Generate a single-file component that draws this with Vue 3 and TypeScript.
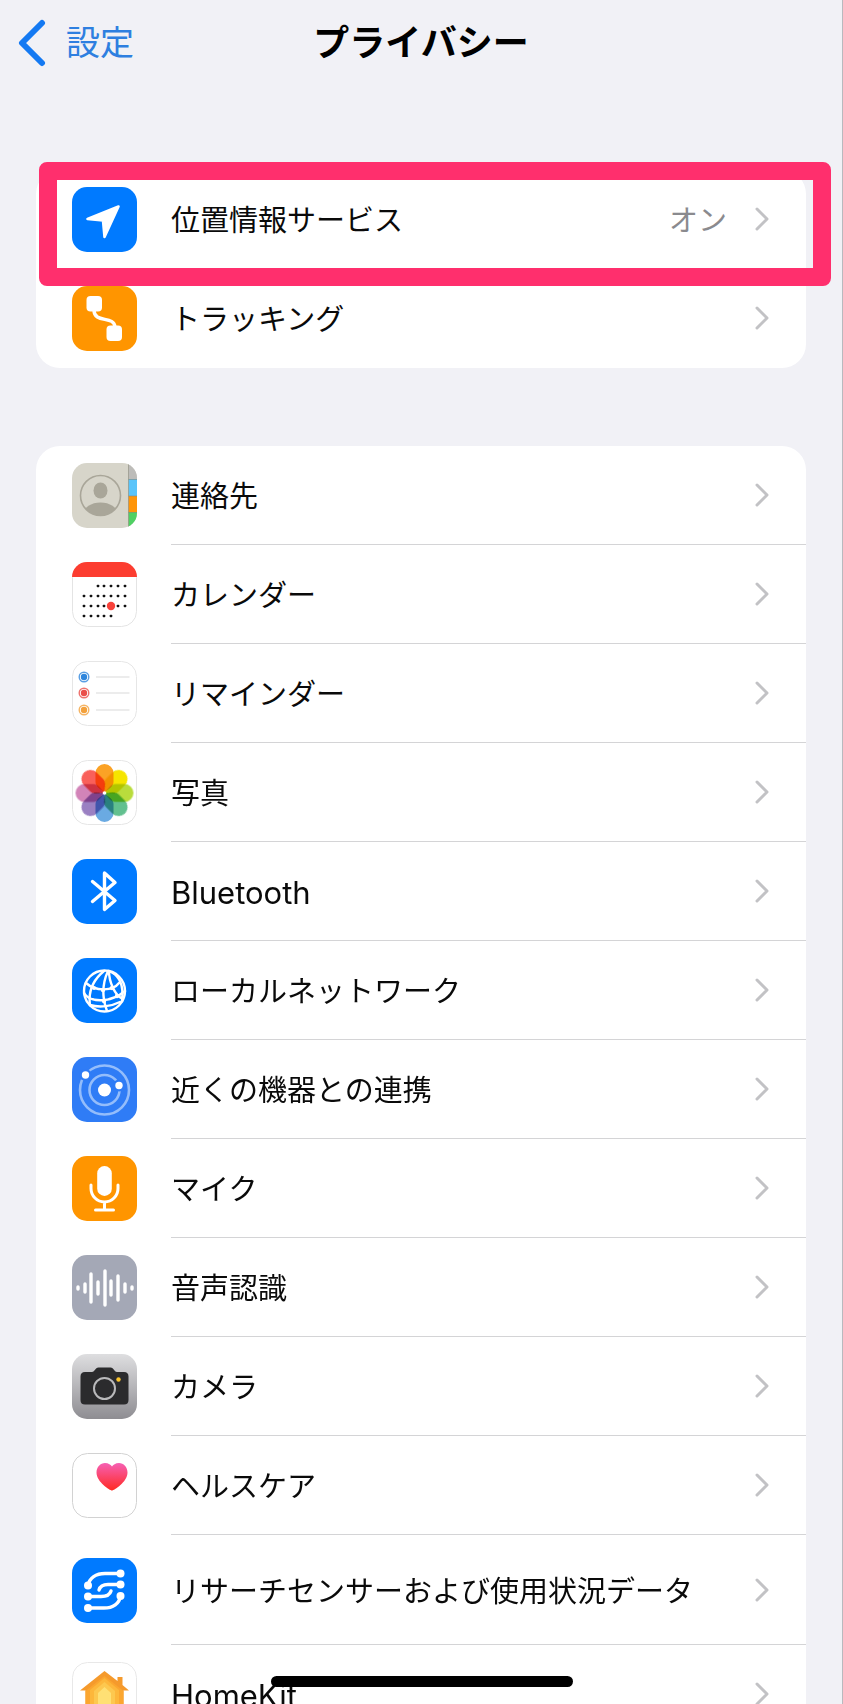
<script setup lang="ts">
interface Row {
  icon: string
  label: string
  value?: string
  tall?: boolean
  latin?: boolean
  highlighted?: boolean
}

const groups: Row[][] = [
  [
    { icon: 'location', label: '位置情報サービス', value: 'オン', highlighted: true },
    { icon: 'tracking', label: 'トラッキング' },
  ],
  [
    { icon: 'contacts', label: '連絡先' },
    { icon: 'calendar', label: 'カレンダー' },
    { icon: 'reminders', label: 'リマインダー' },
    { icon: 'photos', label: '写真' },
    { icon: 'bluetooth', label: 'Bluetooth', latin: true },
    { icon: 'network', label: 'ローカルネットワーク' },
    { icon: 'nearby', label: '近くの機器との連携' },
    { icon: 'mic', label: 'マイク' },
    { icon: 'speech', label: '音声認識' },
    { icon: 'camera', label: 'カメラ' },
    { icon: 'health', label: 'ヘルスケア' },
    { icon: 'research', label: 'リサーチセンサーおよび使用状況データ', tall: true },
    { icon: 'homekit', label: 'HomeKit', latin: true },
  ],
]

const petals = ['#fba225', '#f6e500', '#b9dc3c', '#62c08f', '#6aaae2', '#9a80c2', '#d284b8', '#f9605a']

const dotColumns = [12, 19, 26, 32, 39, 46, 53]
const calendarWeeks = [
  { y: 24, columns: dotColumns.slice(2) },
  { y: 34, columns: dotColumns },
  { y: 44, columns: dotColumns },
  { y: 54, columns: dotColumns.slice(0, 5) },
]

const reminderItems = [
  { y: 16, color: '#2f86dc' },
  { y: 32, color: '#ea4f4a' },
  { y: 49, color: '#f3a13c' },
]

const waveBars = [
  [6, 1], [13, 4], [19, 14], [26, 6], [33, 17], [39, 7], [46, 12], [53, 4], [60, 1],
]
</script>

<template>
  <div class="screen">
    <header class="nav">
      <a class="back" href="#">
        <svg class="back-icon" viewBox="0 0 28 48" aria-hidden="true"><path d="M24 4 4 24 24 44" /></svg>
        <span>設定</span>
      </a>
      <h1>プライバシー</h1>
    </header>

    <main>
      <ul v-for="(rows, g) in groups" :key="g" class="group">
        <li v-for="row in rows" :key="row.icon">
          <a class="row" :class="{ tall: row.tall }" href="#">
            <svg class="icon" viewBox="0 0 65 65" aria-hidden="true">
              <template v-if="row.icon === 'location'">
                <rect width="65" height="65" rx="15" fill="#007aff" />
                <path d="M46.5 19.5 15.5 32 31 33.5 32.5 50Z" fill="#fff" stroke="#fff" stroke-width="2.6" stroke-linejoin="round" />
              </template>
              <template v-else-if="row.icon === 'tracking'">
                <rect width="65" height="65" rx="15" fill="#ff9500" />
                <rect x="14.5" y="10" width="15.5" height="15.5" rx="4" fill="#fff" />
                <rect x="34.5" y="39.5" width="15.5" height="15.5" rx="4" fill="#fff" />
                <path d="M22 24C22 38 42 29 43 41" fill="none" stroke="#fff" stroke-width="3.4" />
              </template>
              <template v-else-if="row.icon === 'contacts'">
                <defs>
                  <clipPath id="contacts-shape"><rect width="65" height="65" rx="15" /></clipPath>
                  <clipPath id="contacts-face"><circle cx="28.5" cy="32.5" r="20" /></clipPath>
                </defs>
                <g clip-path="url(#contacts-shape)">
                  <rect width="65" height="65" fill="#d7d5ca" />
                  <rect x="56.5" width="9" height="16" fill="#bdbcb9" />
                  <rect x="56.5" y="16" width="9" height="17" fill="#5ac4fa" />
                  <rect x="56.5" y="33" width="9" height="16" fill="#ff9509" />
                  <rect x="56.5" y="49" width="9" height="16" fill="#4fd063" />
                  <path d="M56.5 16.5h9M56.5 33h9M56.5 49.5h9M56.5 0v65" stroke="#8a8a7c" stroke-opacity=".6" />
                </g>
                <g clip-path="url(#contacts-face)" fill="#a9a699">
                  <ellipse cx="28.5" cy="27.5" rx="7" ry="8" />
                  <ellipse cx="28.5" cy="51" rx="17" ry="11.5" />
                </g>
                <circle cx="28.5" cy="32.5" r="20" fill="none" stroke="#a9a699" stroke-width="1.6" />
              </template>
              <template v-else-if="row.icon === 'calendar'">
                <rect x=".5" y=".5" width="64" height="64" rx="15" fill="#fff" stroke="#e4e4e4" />
                <path d="M0 15A15 15 0 0 1 15 0H50A15 15 0 0 1 65 15Z" fill="#fc3d30" />
                <g v-for="week in calendarWeeks" :key="week.y" fill="#111">
                  <rect v-for="x in week.columns" :key="x" :x="x - 1.3" :y="week.y - 1.3" width="2.6" height="2.6" rx=".8" />
                </g>
                <circle cx="39" cy="44" r="4.2" fill="#f8423a" />
              </template>
              <template v-else-if="row.icon === 'reminders'">
                <rect x=".5" y=".5" width="64" height="64" rx="15" fill="#fff" stroke="#e6e6e6" />
                <g v-for="item in reminderItems" :key="item.y">
                  <circle cx="12" :cy="item.y" r="3.2" :fill="item.color" />
                  <circle cx="12" :cy="item.y" r="4.8" fill="none" :stroke="item.color" stroke-width="1.4" stroke-opacity=".8" />
                  <path :d="`M24 ${item.y}H57.5`" stroke="#d9d9d9" />
                </g>
              </template>
              <template v-else-if="row.icon === 'photos'">
                <rect x=".5" y=".5" width="64" height="64" rx="15" fill="#fff" stroke="#e6e6e6" />
                <path
                  v-for="(color, i) in petals"
                  :key="color"
                  class="petal"
                  d="M23.5 13A9 9 0 0 1 41.5 13V22C41.5 26 37 29 32.5 32.5C28 29 23.5 26 23.5 22Z"
                  :fill="color"
                  :transform="`rotate(${i * 45} 32.5 33)`"
                />
                <circle cx="32.5" cy="33" r="1.8" fill="#fff" />
              </template>
              <template v-else-if="row.icon === 'bluetooth'">
                <rect width="65" height="65" rx="15" fill="#007aff" />
                <path class="line" d="M20.5 22.5 43 41.5 32.5 50.5V14L43 23.5 20.5 42.5" stroke-width="3.4" />
              </template>
              <template v-else-if="row.icon === 'network'">
                <rect width="65" height="65" rx="15" fill="#007aff" />
                <g class="line" stroke-width="2.4">
                  <circle cx="32.5" cy="33" r="20.5" />
                  <path d="M32 13C21 22 16 33 18 47M36 13C31 24 29 37 35 53M37 13C37 24 43 38 51 41M37 13C47 17 52 27 50 43" />
                  <path d="M14 25C24 34 41 33 47 25M12 35C18 45 39 45 53 33M18 47C28 50 40 48 48 44" />
                </g>
                <g fill="#fff">
                  <circle cx="22" cy="30" r="2" />
                  <circle cx="31" cy="32" r="2.2" />
                  <circle cx="40" cy="30" r="2.2" />
                  <circle cx="32" cy="43" r="2.2" />
                  <circle cx="45" cy="38" r="2.2" />
                </g>
              </template>
              <template v-else-if="row.icon === 'nearby'">
                <rect width="65" height="65" rx="15" fill="#2f7cf6" />
                <circle cx="32.5" cy="33" r="24.5" fill="none" stroke="#94bdfb" stroke-width="2.6" />
                <circle cx="32.5" cy="33" r="15" fill="none" stroke="#94bdfb" stroke-width="2.6" />
                <circle cx="13.5" cy="18" r="6" fill="#2f7cf6" />
                <circle cx="47" cy="28.5" r="6" fill="#2f7cf6" />
                <circle cx="32.5" cy="33" r="6.5" fill="#fff" />
                <circle cx="13.5" cy="18" r="3.7" fill="#fff" />
                <circle cx="47" cy="28.5" r="3.7" fill="#fff" />
              </template>
              <template v-else-if="row.icon === 'mic'">
                <rect width="65" height="65" rx="15" fill="#ff9500" />
                <rect x="25.2" y="10" width="14.6" height="30" rx="7.3" fill="#fff" />
                <path class="line" d="M19 29V32.5A13.5 13.5 0 0 0 46 32.5V29M32.5 46V54M23.5 54H41.5" stroke-width="3" />
              </template>
              <template v-else-if="row.icon === 'speech'">
                <rect width="65" height="65" rx="15" fill="#a4a8b6" />
                <path v-for="[x, h] in waveBars" :key="x" class="line" :d="`M${x} ${33 - h}V${33 + h}`" stroke-width="3.4" />
              </template>
              <template v-else-if="row.icon === 'camera'">
                <defs>
                  <linearGradient id="camera-body" x2="0" y2="1">
                    <stop stop-color="#dedee0" />
                    <stop offset="1" stop-color="#8e8d92" />
                  </linearGradient>
                </defs>
                <rect width="65" height="65" rx="15" fill="url(#camera-body)" />
                <path
                  d="M13 18H20C23 18 23 13.5 26.5 13.5H38.5C42 13.5 42 18 45 18H52Q56.5 18 56.5 22.5V46Q56.5 50.5 52 50.5H13Q8.5 50.5 8.5 46V22.5Q8.5 18 13 18Z"
                  fill="#2b2b2d"
                />
                <circle cx="32.5" cy="34.5" r="10.5" fill="none" stroke="#b9b9bb" stroke-width="2" />
                <circle cx="46.5" cy="25.5" r="2.2" fill="#fbc42d" />
              </template>
              <template v-else-if="row.icon === 'health'">
                <defs>
                  <linearGradient id="heart" x2="0" y2="1">
                    <stop stop-color="#f660b4" />
                    <stop offset="1" stop-color="#ff2a22" />
                  </linearGradient>
                </defs>
                <rect x=".5" y=".5" width="64" height="64" rx="15" fill="#fff" stroke="#d2d2d2" />
                <path
                  d="M40 37.5C38 37.5 24.5 29 24.5 19.5C24.5 14 28.5 10 33 10C36.5 10 39 12 40 13.5C41 12 43.5 10 47 10C51.5 10 55.5 14 55.5 19.5C55.5 29 42 37.5 40 37.5Z"
                  fill="url(#heart)"
                />
              </template>
              <template v-else-if="row.icon === 'research'">
                <rect width="65" height="65" rx="15" fill="#007aff" />
                <g class="line" stroke-width="3.4">
                  <path d="M48.5 15.5H33C24 15.5 17.5 20 16 27.5" />
                  <path d="M48.5 26.5H36C30 26.5 28 28.5 27 32" />
                  <path d="M16 38.5H29C35 38.5 38 36.5 39 33" />
                  <path d="M16 50H32C41 50 47.5 45.5 48.5 38" />
                </g>
                <g fill="#fff">
                  <circle cx="48.5" cy="15.5" r="4" />
                  <circle cx="16" cy="27.5" r="4" />
                  <circle cx="48.5" cy="26.5" r="4" />
                  <circle cx="16" cy="38.5" r="4" />
                  <circle cx="48.5" cy="38" r="4" />
                  <circle cx="16" cy="50" r="4" />
                </g>
              </template>
              <template v-else>
                <rect x=".5" y=".5" width="64" height="64" rx="15" fill="#fff" stroke="#e8e8e8" />
                <path d="M32.5 9 45.5 19V15H50.5V23L57 28.5H51.5V56H13.5V28.5H8Z" fill="#f59a2c" />
                <path d="M32.5 14 51.5 29V56H13.5V29Z" fill="#fba62f" />
                <path d="M32.5 16 47 28V51H18V28Z" fill="#fdb73b" />
                <path d="M32.5 20 43 29V47H22V29Z" fill="#fdc84f" />
                <path d="M32.5 25 39 31V42H26V31Z" fill="#ffe074" />
              </template>
            </svg>
            <span class="content">
              <span class="label" :class="{ latin: row.latin }">{{ row.label }}</span>
              <span v-if="row.value" class="value">{{ row.value }}</span>
              <svg class="chevron" viewBox="0 0 14 24" aria-hidden="true"><path d="M2 2 12 12 2 22" /></svg>
            </span>
          </a>
          <span v-if="row.highlighted" class="highlight" aria-hidden="true"></span>
        </li>
      </ul>
    </main>

    <div class="home-indicator" aria-hidden="true"></div>
  </div>
</template>

<style>
html,
body {
  background: #f1f1f6;
}
body {
  margin: 0;
}
</style>

<style scoped>
.screen {
  box-sizing: border-box;
  height: 100vh;
  overflow-x: hidden;
  overflow-y: auto;
  scrollbar-width: none;
  border-right: 1px solid #b9b9be;
  background: #f1f1f6;
  color: #0a0a0a;
  font-family: Inter, "Noto Sans CJK JP", sans-serif;
  font-size: 29px;
  line-height: 40px;
}
.nav {
  display: grid;
  grid-template-columns: 1fr auto 1fr;
  align-items: center;
  height: 86px;
  padding: 0 18px;
}
.back {
  display: flex;
  align-items: center;
  gap: 20px;
  color: #2e7fe0;
  font-size: 34px;
  font-weight: 400;
  text-decoration: none;
}
.back-icon {
  width: 28px;
  height: 48px;
  fill: none;
  stroke: #1479f2;
  stroke-width: 6;
  stroke-linecap: round;
  stroke-linejoin: round;
}
h1 {
  margin: 0;
  color: #000;
  font-size: 36px;
  font-weight: 700;
}
main {
  padding: 84px 36px 40px;
}
.group {
  margin: 0 0 78px;
  padding: 0;
  border-radius: 24px;
  background: #fff;
  list-style: none;
}
li {
  position: relative;
}
.row {
  display: flex;
  align-items: stretch;
  gap: 34px;
  height: 99px;
  padding-left: 36px;
  color: inherit;
  text-decoration: none;
}
.row.tall {
  height: 110px;
}
.icon {
  flex: none;
  align-self: center;
  width: 65px;
  height: 65px;
}
.line {
  fill: none;
  stroke: #fff;
  stroke-linecap: round;
  stroke-linejoin: round;
}
.petal {
  mix-blend-mode: multiply;
}
.content {
  display: flex;
  flex: 1;
  align-items: center;
  min-width: 0;
  padding-right: 37px;
  border-bottom: 1px solid #d4d4d6;
}
li:last-child .content {
  border-bottom-color: transparent;
}
.label,
.value {
  padding-top: 4px;
}
.label {
  flex: 1;
}
.latin {
  font-size: 31px;
}
.value {
  margin-right: 28px;
  color: #8a8a8e;
}
.chevron {
  flex: none;
  width: 14px;
  height: 24px;
  fill: none;
  stroke: #c2c2c5;
  stroke-width: 3;
  stroke-linecap: round;
  stroke-linejoin: round;
}
.highlight {
  position: absolute;
  z-index: 1;
  inset: -8px -25px -17px 3px;
  border: 18px solid #ff2f6d;
  border-radius: 8px;
  pointer-events: none;
}
.home-indicator {
  position: fixed;
  bottom: 17px;
  left: 50%;
  width: 302px;
  height: 11px;
  border-radius: 6px;
  background: #000;
  transform: translateX(-50%);
}
</style>
